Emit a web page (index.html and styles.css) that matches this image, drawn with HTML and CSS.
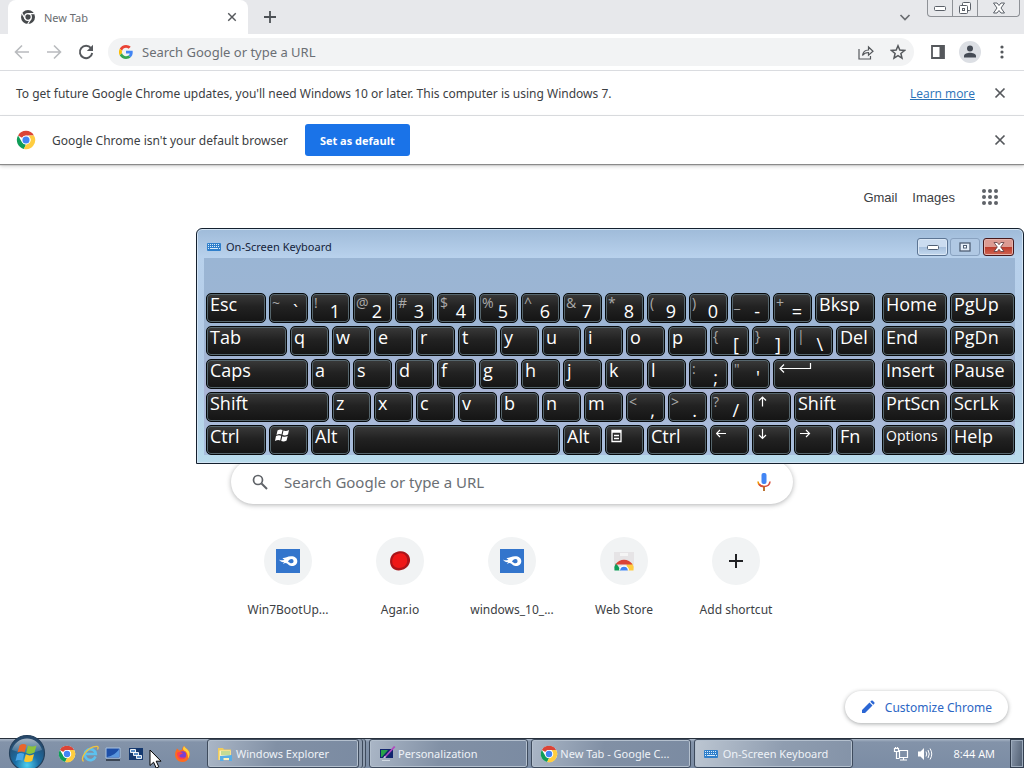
FILE: index.html
```html
<!DOCTYPE html>
<html lang="en">
<head>
<meta charset="utf-8">
<title>New Tab</title>
<link rel="stylesheet" href="styles.css">
</head>
<body>
<svg class="defs" aria-hidden="true">
  <symbol id="chrome" viewBox="0 0 48 48">
    <circle cx="24" cy="24" r="22" fill="#fff"/>
    <path d="M24 2a22 22 0 0 1 19.050 11H24a11 11 0 0 0-9.530 5.500L4.950 13A22 22 0 0 1 24 2z" fill="#db4437"/>
    <path d="M4.950 13l9.520 16.500A11 11 0 0 0 24 35l-5 10.400A22 22 0 0 1 4.950 13z" fill="#0f9d58"/>
    <path d="M43.050 13A22 22 0 0 1 19 45.400L24 35l9.530-5.500A11 11 0 0 0 32 16.400L31 13z" fill="#ffcd40"/>
    <circle cx="24" cy="24" r="10.500" fill="#fff"/>
    <circle cx="24" cy="24" r="8.500" fill="#4285f4"/>
  </symbol>
  <symbol id="close" viewBox="0 0 12 12"><path d="M1.500 1.500l9 9m0-9l-9 9" stroke="currentColor" stroke-width="1.700" fill="none"/></symbol>
  <symbol id="kbd" viewBox="0 0 14 8">
    <rect width="14" height="8" rx="1" fill="#2f7fcb"/>
    <path d="M1 1.500h12M1 3.500h12" stroke="#d9ecfb" stroke-width="1" stroke-dasharray="1 1"/><path d="M1 5.500h12" stroke="#d9ecfb" stroke-dasharray="1 1 8 1"/>
  </symbol>
  <symbol id="mediafire" viewBox="0 0 24 24">
    <rect width="24" height="24" fill="#3375cc"/>
    <path d="M3 10.500C5 11.800 7 11.500 8.500 10.500 7.500 10.300 7 9.700 6.500 9 9 9.500 11 7.200 15 7.200c4 0 6.300 2 6.300 5s-2.500 5-5.800 4.800c-3-.2-3.500-2.700-6-2.900-.9 0-1.500.4-2.300.9.2-1 .5-1.500 1.100-2-1.800.5-3.800-.2-5.300-2.500z" fill="#fff"/>
    <path d="M12 12.700c.8-1.500 2-2.600 3.500-2.600a2.100 2.100 0 0 1 0 4.200c-1.500 0-2-1.200-3.500-1.600z" fill="#3375cc"/>
  </symbol>
</svg>

<div class="desktop">
  <main class="browser">
    <header class="tabstrip">
      <div class="tab">
        <svg class="i16" viewBox="0 0 16 16"><circle cx="8" cy="8" r="7" fill="#46494c"/><circle cx="8" cy="8" r="3.300" fill="none" stroke="#fff" stroke-width="1.300"/><path d="M8 4.700h6.500M5.100 9.700L2 4.300M10.900 9.700L7.700 15" stroke="#fff" stroke-width="1.200"/></svg>
        <span class="tab-title">New Tab</span>
        <button class="icon-btn" aria-label="Close tab"><svg class="i10"><use href="#close"/></svg></button>
      </div>
      <button class="icon-btn new-tab" aria-label="New tab"><svg class="i12" viewBox="0 0 12 12"><path d="M6 0v12M0 6h12" stroke="#4d5156" stroke-width="1.800"/></svg></button>
      <button class="icon-btn tab-search" aria-label="Search tabs"><svg class="i12" viewBox="0 0 12 12"><path d="M1.500 4L6 8.500 10.500 4" fill="none" stroke="currentColor" stroke-width="1.700"/></svg></button>
      <div class="win-controls">
        <button aria-label="Minimize"><svg width="14" height="8" viewBox="0 0 14 8"><rect x="1.500" y="2.500" width="11" height="4" rx="1" fill="#fff" stroke="#5b6068"/></svg></button>
        <button aria-label="Restore"><svg width="14" height="14" viewBox="0 0 14 14" fill="#fff" stroke="#5b6068"><rect x="4.500" y="1.500" width="8" height="8" rx="1"/><rect x="1.500" y="4.500" width="8" height="8" rx="1"/><rect x="4.500" y="7.500" width="2" height="2"/></svg></button>
        <button class="wide" aria-label="Close"><svg width="14" height="12" viewBox="0 0 14 12"><path d="M1.500 1h3.500l2 2.500L9 1h3.500L9 6l3.500 5H9L7 8.500 5 11H1.500L5 6z" fill="#fff" stroke="#5b6068"/></svg></button>
      </div>
    </header>

    <nav class="toolbar" aria-label="Navigation">
      <button class="icon-btn faded" aria-label="Back"><svg class="i16" viewBox="0 0 16 16"><path d="M15 8H2M8 1.500L1.500 8 8 14.500" fill="none" stroke="currentColor" stroke-width="1.600"/></svg></button>
      <button class="icon-btn faded" aria-label="Forward"><svg class="i16" viewBox="0 0 16 16"><path d="M1 8h13M8 1.500L14.500 8 8 14.500" fill="none" stroke="currentColor" stroke-width="1.600"/></svg></button>
      <button class="icon-btn" aria-label="Reload"><svg class="i16" viewBox="0 0 16 16"><path d="M13 4.200A6.200 6.200 0 1 0 14.200 9" fill="none" stroke="currentColor" stroke-width="1.900"/><path d="M15 .8v6.200H8.800z" fill="currentColor"/></svg></button>
      <div class="omnibox">
        <svg class="i14" viewBox="0 0 48 48"><path fill="#ea4335" d="M24 9.500c3.500 0 6.700 1.200 9.200 3.600l6.900-6.900C35.900 2.400 30.500 0 24 0 14.600 0 6.500 5.400 2.600 13.200l8 6.200C12.400 13.700 17.700 9.500 24 9.500z"/><path fill="#4285f4" d="M47 24.600c0-1.600-.2-3.100-.4-4.600H24v9h12.900c-.6 3-2.200 5.500-4.700 7.200l7.700 6C44.400 38 47 31.800 47 24.600z"/><path fill="#fbbc05" d="M10.500 28.600a14.500 14.500 0 0 1 0-9.200l-8-6.200a24 24 0 0 0 0 21.600l8-6.200z"/><path fill="#34a853" d="M24 48c6.500 0 11.900-2.100 15.900-5.800l-7.700-6c-2.200 1.500-4.900 2.300-8.200 2.300-6.300 0-11.600-4.200-13.500-9.900l-8 6.200C6.500 42.600 14.600 48 24 48z"/></svg>
        <input type="text" aria-label="Address bar" placeholder="Search Google or type a URL">
        <button class="icon-btn" aria-label="Share"><svg class="i16" viewBox="0 0 16 16"><path d="M1 5v10h11.500v-3M4.500 11.500C5 8 7 6 10.500 6V3L15 7.200l-4.500 4V8.500c-2.500 0-4.500.8-6 3z" fill="none" stroke="currentColor" stroke-width="1.200"/></svg></button>
        <button class="icon-btn" aria-label="Bookmark"><svg class="i16" viewBox="0 0 16 16"><path d="M8 1.800l1.800 4.300 4.700.4-3.600 3 1.100 4.600L8 11.700l-4 2.400 1.100-4.600-3.600-3 4.700-.4z" fill="none" stroke="currentColor" stroke-width="1.500"/></svg></button>
      </div>
      <button class="icon-btn" aria-label="Side panel"><svg class="i14" viewBox="0 0 14 14"><path d="M1 1h12v12H1z" fill="none" stroke="currentColor" stroke-width="1.800"/><path d="M8.500 1H13v12H8.500z" fill="currentColor"/></svg></button>
      <button class="icon-btn" aria-label="Profile"><svg class="i22" viewBox="0 0 22 22"><circle cx="11" cy="11" r="11" fill="#dcdfe4"/><circle cx="11" cy="7.500" r="3" fill="#454b55"/><path d="M5 16.500v-1.500c0-2 3.500-3.200 6-3.200s6 1.200 6 3.200v1.500z" fill="#454b55"/></svg></button>
      <button class="icon-btn" aria-label="Menu"><svg class="i16" viewBox="0 0 16 16" fill="currentColor"><circle cx="8" cy="3" r="1.600"/><circle cx="8" cy="8" r="1.600"/><circle cx="8" cy="13" r="1.600"/></svg></button>
    </nav>

    <section class="infobar update">
      <p>To get future Google Chrome updates, you'll need Windows 10 or later. This computer is using Windows 7.</p>
      <a class="learn" href="#">Learn more</a>
      <button class="icon-btn" aria-label="Dismiss"><svg class="i12"><use href="#close"/></svg></button>
    </section>
    <section class="infobar default">
      <svg class="i20"><use href="#chrome"/></svg>
      <p>Google Chrome isn't your default browser</p>
      <button class="primary">Set as default</button>
      <button class="icon-btn end" aria-label="Dismiss"><svg class="i12"><use href="#close"/></svg></button>
    </section>

    <section class="page">
      <nav class="page-links" aria-label="Google">
        <a href="#">Gmail</a>
        <a href="#">Images</a>
        <button class="icon-btn apps" aria-label="Google apps"><svg width="18" height="18" viewBox="0 0 18 18" fill="#5f6368"><circle cx="3" cy="3" r="2"/><circle cx="9" cy="3" r="2"/><circle cx="15" cy="3" r="2"/><circle cx="3" cy="9" r="2"/><circle cx="9" cy="9" r="2"/><circle cx="15" cy="9" r="2"/><circle cx="3" cy="15" r="2"/><circle cx="9" cy="15" r="2"/><circle cx="15" cy="15" r="2"/></svg></button>
      </nav>
      <div class="searchbox">
        <svg class="i16" viewBox="0 0 16 16"><circle cx="6" cy="6" r="4.500" fill="none" stroke="#5f6368" stroke-width="1.700"/><path d="M9.500 9.500L15 15" stroke="#5f6368" stroke-width="2"/></svg>
        <input type="text" aria-label="Search" placeholder="Search Google or type a URL">
        <button class="icon-btn" aria-label="Voice search"><svg width="14" height="18" viewBox="0 0 14 18"><rect x="4.500" y="0" width="5" height="11" rx="2" fill="#4285f4"/><path d="M1 8.500c.3 3.300 2.500 5 6 5" fill="none" stroke="#f29900" stroke-width="1.600"/><path d="M2 11c1 1.800 2.700 2.500 5 2.500 3.500 0 5.700-1.700 6-5" fill="none" stroke="#d95040" stroke-width="1.600"/><path d="M7 13.500V18" stroke="#b5651d" stroke-width="1.800"/></svg></button>
      </div>
      <div class="shortcuts">
        <a href="#"><span class="disc"><svg class="i24"><use href="#mediafire"/></svg></span><span>Win7BootUp...</span></a>
        <a href="#"><span class="disc"><svg class="i24" viewBox="0 0 24 24"><path d="M10 2.500c4-1 8 0 10.500 3.500 2.500 4 1.800 8-.5 11-3 4-9 5.500-13.500 3.500C2 18 1.500 13 2.500 9 3.500 5.500 6 3.500 10 2.500z" fill="#a9141a"/><path d="M11 4.500c4-.8 6 .8 7.500 3.500 1.300 3 .8 6-1 8.200-2.500 2.800-7 3.500-10.300 1.800C4 16 4 13 4.500 10c.8-3.200 3.200-4.800 6.500-5.500z" fill="#ef1717"/></svg></span><span>Agar.io</span></a>
        <a href="#"><span class="disc"><svg class="i24"><use href="#mediafire"/></svg></span><span>windows_10_...</span></a>
        <a href="#"><span class="disc"><svg class="i24" viewBox="0 0 24 24"><path d="M2 3h20v15H2z" fill="#e6e4e6"/><path d="M8 4h8v3H8z" fill="#f5f5f5"/><path d="M2.500 21.500A10 10 0 0 1 4 14l5 7.500z" fill="#0f9d58"/><path d="M20 14a10 10 0 0 1 1.500 7.500H15L14.500 14z" fill="#ffcd40"/><path d="M3.500 15.500a10 10 0 0 1 17 0z" fill="#db4437"/><path d="M7 21.500a5 5 0 0 1 10 0z" fill="#fff"/><path d="M8.200 21.500a3.800 3.800 0 0 1 7.600 0z" fill="#4285f4"/></svg></span><span>Web Store</span></a>
        <a href="#"><span class="disc"><svg width="14" height="14" viewBox="0 0 14 14"><path d="M7 0v14M0 7h14" stroke="#202124" stroke-width="2"/></svg></span><span>Add shortcut</span></a>
      </div>
      <button class="customize"><svg width="14" height="14" viewBox="0 0 14 14" fill="#2b66d4"><path d="M1 13v-3l7.500-7.500 3 3L4 13zM9.300 1.700l1-1c.4-.4 1-.4 1.400 0l1.600 1.600c.4.4.4 1 0 1.400l-1 1z"/></svg>Customize Chrome</button>
    </section>
  </main>

  <section class="osk" aria-label="On-Screen Keyboard">
    <header class="osk-title">
      <svg width="14" height="8"><use href="#kbd"/></svg>
      <h1>On-Screen Keyboard</h1>
      <button aria-label="Minimize"><svg width="14" height="8" viewBox="0 0 14 8"><rect x="1.500" y="2.500" width="11" height="4" rx="1" fill="#fff" stroke="#4f5f75"/></svg></button>
      <button class="off" aria-label="Maximize" disabled><svg width="12" height="10" viewBox="0 0 12 10"><rect x="1" y="1" width="10" height="8" fill="#e5eef8" stroke="#4f5f75" stroke-width="1.300"/><rect x="4.500" y="3.500" width="3" height="2.500" fill="#fff" stroke="#4f5f75"/></svg></button>
      <button class="x" aria-label="Close"><svg width="12" height="10" viewBox="0 0 12 10"><path d="M1 .5h3.200L6 2.700 7.800.5H11L7.700 5 11 9.500H7.800L6 7.300 4.200 9.500H1L4.300 5z" fill="#fff" stroke="#5a3a3e" stroke-width=".8"/></svg></button>
    </header>
    <div class="keys">
      <div class="main-keys">
        <button class="key s3">Esc</button>
        <button class="key dual"><small>~</small><b>`</b></button>
        <button class="key dual"><small>!</small><b>1</b></button>
        <button class="key dual"><small>@</small><b>2</b></button>
        <button class="key dual"><small>#</small><b>3</b></button>
        <button class="key dual"><small>$</small><b>4</b></button>
        <button class="key dual"><small>%</small><b>5</b></button>
        <button class="key dual"><small>^</small><b>6</b></button>
        <button class="key dual"><small>&amp;</small><b>7</b></button>
        <button class="key dual"><small>*</small><b>8</b></button>
        <button class="key dual"><small>(</small><b>9</b></button>
        <button class="key dual"><small>)</small><b>0</b></button>
        <button class="key dual"><small>_</small><b>-</b></button>
        <button class="key dual"><small>+</small><b>=</b></button>
        <button class="key s3">Bksp</button>

        <button class="key s4">Tab</button>
        <button class="key">q</button>
        <button class="key">w</button>
        <button class="key">e</button>
        <button class="key">r</button>
        <button class="key">t</button>
        <button class="key">y</button>
        <button class="key">u</button>
        <button class="key">i</button>
        <button class="key">o</button>
        <button class="key">p</button>
        <button class="key dual"><small>{</small><b>[</b></button>
        <button class="key dual"><small>}</small><b>]</b></button>
        <button class="key dual"><small>|</small><b>\</b></button>
        <button class="key">Del</button>

        <button class="key s5">Caps</button>
        <button class="key">a</button>
        <button class="key">s</button>
        <button class="key">d</button>
        <button class="key">f</button>
        <button class="key">g</button>
        <button class="key">h</button>
        <button class="key">j</button>
        <button class="key">k</button>
        <button class="key">l</button>
        <button class="key dual"><small>:</small><b>;</b></button>
        <button class="key dual"><small>"</small><b>'</b></button>
        <button class="key s5 glyph" aria-label="Enter"><svg width="34" height="10" viewBox="0 0 34 10"><path d="M31.500 0v5.500H1M5 1.500l-4 4 4 4" fill="none" stroke="#fff" stroke-width="1.200"/></svg></button>

        <button class="key s6">Shift</button>
        <button class="key">z</button>
        <button class="key">x</button>
        <button class="key">c</button>
        <button class="key">v</button>
        <button class="key">b</button>
        <button class="key">n</button>
        <button class="key">m</button>
        <button class="key dual"><small>&lt;</small><b>,</b></button>
        <button class="key dual"><small>&gt;</small><b>.</b></button>
        <button class="key dual"><small>?</small><b>/</b></button>
        <button class="key glyph" aria-label="Up"><svg width="12" height="12" viewBox="0 0 12 12"><path d="M4.500 10.500V1M1 4.500L4.500 1 8 4.500" fill="none" stroke="#fff" stroke-width="1.200"/></svg></button>
        <button class="key s4">Shift</button>

        <button class="key s3">Ctrl</button>
        <button class="key glyph" aria-label="Windows"><svg width="15" height="13" viewBox="0 0 15 13" fill="#fff"><path d="M2.500 1.500Q5 0 7.500 1L6.500 5.500Q4 4.500 1.500 6zM8.500 1.500Q11 2.500 14 1L13 5.500Q10 7 7.500 6zM1 7Q4 5.800 6.200 6.800L5.200 11.500Q3 10.500 0 12zM7.300 7.300Q10 8.500 12.700 7L11.600 11.500Q9 13 6.200 12z"/></svg></button>
        <button class="key">Alt</button>
        <button class="key s10" aria-label="Space"></button>
        <button class="key">Alt</button>
        <button class="key glyph" aria-label="Menu key"><svg width="12" height="14" viewBox="0 0 12 14"><path d="M1 1.500h9v11H1zM1 3h9M3 6.500h5M3 9.500h5" fill="none" stroke="#fff" stroke-width="1.300"/></svg></button>
        <button class="key s3">Ctrl</button>
        <button class="key glyph" aria-label="Left"><svg width="12" height="12" viewBox="0 0 12 12"><path d="M10 4.500H.5M4 1L.5 4.500 4 8" fill="none" stroke="#fff" stroke-width="1.200"/></svg></button>
        <button class="key glyph" aria-label="Down"><svg width="12" height="12" viewBox="0 0 12 12"><path d="M4.500 0v9.500M1 6l3.500 3.500L8 6" fill="none" stroke="#fff" stroke-width="1.200"/></svg></button>
        <button class="key glyph" aria-label="Right"><svg width="12" height="12" viewBox="0 0 12 12"><path d="M0 4.500h9.500M6 1l3.500 3.500L6 8" fill="none" stroke="#fff" stroke-width="1.200"/></svg></button>
        <button class="key">Fn</button>
      </div>
      <div class="side-keys">
        <button class="key">Home</button><button class="key">PgUp</button>
        <button class="key">End</button><button class="key">PgDn</button>
        <button class="key">Insert</button><button class="key">Pause</button>
        <button class="key">PrtScn</button><button class="key">ScrLk</button>
        <button class="key compact">Options</button><button class="key">Help</button>
      </div>
    </div>
  </section>

  <footer class="taskbar">
    <div class="quick">
      <button class="start" aria-label="Start"><svg width="38" height="38" viewBox="0 0 38 38">
        <defs>
          <radialGradient id="orb" cx=".5" cy=".85" r=".75"><stop offset="0" stop-color="#4ed0f0"/><stop offset=".45" stop-color="#1b6fa6"/><stop offset="1" stop-color="#27496b"/></radialGradient>
          <linearGradient id="shine" x2="0" y2="1"><stop offset="0" stop-color="#fff" stop-opacity=".6"/><stop offset="1" stop-color="#fff" stop-opacity=".1"/></linearGradient>
        </defs>
        <circle cx="19" cy="19" r="17.500" fill="url(#orb)" stroke="#24405c" stroke-width="1.200"/>
        <path d="M4 16A15.500 15.500 0 0 1 34 16Q19 22 4 16z" fill="url(#shine)"/>
        <path d="M11.500 11.500Q15 9 18.500 11l-1.800 7.200Q13 16.500 9.500 18.500z" fill="#e8662c"/><path d="M20 11.500Q24 13.500 28.500 11.500L26.500 18.500Q22 21 18.200 19z" fill="#8cc43c"/><path d="M9.200 20Q12.500 18.200 16.200 19.700l-1.700 7Q11 25 7.500 27z" fill="#4aa5e6"/><path d="M17.800 20.300Q21.500 22.500 26 20.300L24.200 27Q20 29 16 27.200z" fill="#fbc62d"/>
      </svg></button>
      <button class="launch" aria-label="Chrome"><svg class="i18"><use href="#chrome"/></svg></button>
      <button class="launch" aria-label="Internet Explorer"><svg class="i18" viewBox="0 0 18 18"><path d="M14.500 11.500a5.500 5.500 0 1 1 .3-2.500H5" fill="none" stroke="#5cc1ef" stroke-width="2.600"/><path d="M2.500 16.500C-1 13 6 2 15.500 1.300c2-.1 2 1.500 1 3.200" fill="none" stroke="#f2c43c" stroke-width="1.300"/></svg></button>
      <button class="launch" aria-label="Show desktop"><svg class="i18" viewBox="0 0 18 18"><path d="M2 3h14v10H2z" fill="#1e4fa8" stroke="#a9c3e0"/><path d="M3 12C8 11 13 8 15 4v8z" fill="#5a96dd"/><path d="M2 14h14v2H2z" fill="#3b4656"/></svg></button>
      <button class="launch" aria-label="Switch windows"><svg class="i18" viewBox="0 0 18 18"><path d="M2 3h14v12H2z" fill="#14386e"/><path d="M3.500 4.500h5v3h-5zM6.500 7.500h5v3h-5zM9.500 10.500h5v3h-5z" fill="#5d90c8" stroke="#fff" stroke-width=".9"/></svg></button>
      <button class="launch fox" aria-label="Firefox"><svg class="i18" viewBox="0 0 18 18"><path d="M10 1c1 2 3.500 2.500 5 5.500 2 4-.5 10.500-6.500 10.500C3 17 .5 12.500 1.200 8 1.500 6 2.500 5 3 3.500 4 4 4.500 5 5 5.500 6 5 7 4.800 8 5c0-1.500 1-3 2-4z" fill="#ff6a1f"/><path d="M10 1c1 2 3.500 2.500 5 5.500 1 2.500.5 5-1 7 .2-4-1-7-4-8-1.500-.8-1-3 0-4.500z" fill="#ffd13b"/><circle cx="8.500" cy="10" r="3.700" fill="#7b3fd0"/><path d="M3 8c2-2 4-.5 6 0-1 1.500-3 1-3.500 2.500S8 13.500 11 12c-2 4-8 3-8-4z" fill="#ff3e4e"/></svg></button>
      <svg class="cursor" width="13" height="20" viewBox="0 0 13 20"><path d="M1 1v15.500l3.600-3.300 2.600 5.800 2.600-1.200-2.600-5.600H12z" fill="#fff" stroke="#000"/></svg>
    </div>
    <div class="tasks">
      <button class="task stack"><svg class="i18" viewBox="0 0 18 18"><path d="M2 3h5l1 1.500h7V15H2z" fill="#f0cb5d"/><path d="M3.500 5.500h11V15h-11z" fill="#fdf2bd"/><path d="M5 7h9M5 9h9" stroke="#8cc46a"/><path d="M4 11l12-1v6h-3v-3H7.500v3H4z" fill="#58aee6"/></svg><span>Windows Explorer</span></button>
      <button class="task"><svg class="i18" viewBox="0 0 18 18"><path d="M2 4h13v9H2z" fill="#10256e"/><path d="M3 5h7L4 12H3z" fill="#27a14a"/><path d="M6 12L16 1l1.500 1L8 12z" fill="#b04ac0"/><path d="M5 13l2-2 1 1.500z" fill="#fff"/><path d="M4 15h8v1H4z" fill="#cfd8e2"/></svg><span>Personalization</span></button>
      <button class="task"><svg class="i18"><use href="#chrome"/></svg><span>New Tab - Google C...</span></button>
      <button class="task active"><svg class="kb" width="14" height="8"><use href="#kbd"/></svg><span>On-Screen Keyboard</span></button>
    </div>
    <div class="tray">
      <svg class="i16" viewBox="0 0 16 16" fill="none" stroke="#fff" stroke-width="1.200"><path d="M6.500 4.500h8v7h-8zM7 14h7M10.500 11.500V14M1.500 2.500h4v3h-4zM2.500 1v1.500M4.500 1v1.500M3.500 5.500v7h3"/></svg>
      <svg class="i16" viewBox="0 0 16 16"><path d="M1 5.500h2.500L7 2v12l-3.500-3.500H1z" fill="#fff"/><path d="M9 5.500q1.500 2.500 0 5M11 4q2.500 4 0 8M13 2.500q3.500 5.500 0 11" fill="none" stroke="#fff"/></svg>
      <time>8:44 AM</time>
    </div>
    <button class="peek" aria-label="Show desktop"></button>
  </footer>
</div>
</body>
</html>
```
FILE: styles.css
```css
* { box-sizing: border-box; }

body {
  margin: 0;
  font-family: "Noto Sans", "Open Sans", sans-serif;
  font-size: 12px;
  color: #3c4043;
}

button {
  font: inherit;
  color: inherit;
  padding: 0;
  border: 0;
  background: none;
}

input {
  font: inherit;
  flex: 1;
  min-width: 0;
  padding: 0;
  border: 0;
  outline: 0;
  background: none;
}
input::placeholder { color: #6b6f74; opacity: 1; }
p, h1 { margin: 0; font-size: 12px; font-weight: 400; }
svg { display: block; flex: none; }

.defs { position: absolute; width: 0; height: 0; }
.i10 { width: 10px; height: 10px; }
.i12 { width: 12px; height: 12px; }
.i14 { width: 14px; height: 14px; }
.i16 { width: 16px; height: 16px; }
.i18 { width: 18px; height: 18px; }
.i20 { width: 20px; height: 20px; }
.i22 { width: 22px; height: 22px; }
.i24 { width: 24px; height: 24px; }

.desktop {
  position: relative;
  display: flex;
  flex-direction: column;
  min-height: 100vh;
  overflow: hidden;
}

.browser { display: flex; flex: 1; flex-direction: column; background: #fff; }

.icon-btn {
  display: flex;
  flex: none;
  align-items: center;
  justify-content: center;
  color: #55585c;
}

/* Tab strip */
.tabstrip {
  display: flex;
  align-items: center;
  height: 34px;
  padding: 0 4px 0 8px;
  background: #e7e8eb;
}
.tab {
  display: flex;
  align-items: center;
  gap: 8px;
  width: 240px;
  height: 34px;
  padding: 0 11px 0 12px;
  border-radius: 8px 8px 0 0;
  background: #fff;
}
.tab-title { flex: 1; color: #6a6d71; font-size: 11px; }
.new-tab { margin-left: 16px; }
.tab-search { margin-left: auto; color: #6a6d71; }
.win-controls {
  display: flex;
  align-self: flex-start;
  height: 17px;
  margin-left: 16px;
  border: 1px solid #8e9196;
  border-top: 0;
  border-radius: 0 0 4px 4px;
}
.win-controls button {
  display: flex;
  align-items: center;
  justify-content: center;
  width: 25px;
  border-right: 1px solid #8e9196;
}
.win-controls .wide { width: 41px; border-right: 0; }

/* Toolbar */
.toolbar {
  display: flex;
  align-items: center;
  height: 37px;
  padding: 0 6px;
  border-bottom: 1px solid #dadce0;
}
.toolbar .icon-btn { width: 32px; }
.toolbar .faded { color: #b9bbbe; }
.omnibox {
  display: flex;
  flex: 1;
  align-items: center;
  height: 28px;
  margin: 0 8px 0 6px;
  padding-left: 11px;
  border-radius: 14px;
  background: #f2f3f4;
  font-size: 13px;
}
.omnibox input { margin-left: 9px; }

/* Info bars */
.infobar { display: flex; align-items: center; padding: 0 18px 0 16px; }
.update { height: 45px; border-bottom: 1px solid #dadce0; }
.learn { margin: 0 19px 0 auto; color: #2a72b8; font-family: "Open Sans", sans-serif; }
.default {
  height: 48px;
  box-shadow: 0 1px 1px #8a8a8a, 0 2px 4px #ccc;
}
.default p { margin: 0 17px 0 16px; }
.primary {
  height: 32px;
  padding: 0 15px;
  border-radius: 3px;
  background: #1a73e8;
  color: #fff;
  font-family: "Open Sans", sans-serif;
  font-size: 11px;
  font-weight: 700;
}
.end { margin-left: auto; }

/* New tab page */
.page { display: flex; flex: 1; flex-direction: column; align-items: center; }
.page-links {
  display: flex;
  align-self: flex-end;
  align-items: center;
  gap: 15px;
  padding: 24px 25px 0 0;
  font-family: "Liberation Sans", sans-serif;
  font-size: 13px;
}
.page-links a { color: #3c4043; text-decoration: none; }
.apps { margin-left: 11px; }
.searchbox {
  display: flex;
  align-items: center;
  gap: 16px;
  width: calc(100% - 48px);
  max-width: 562px;
  height: 44px;
  margin-top: 254px;
  padding: 0 22px 0 21px;
  border-radius: 22px;
  background: #fff;
  box-shadow: 0 1px 5px rgba(32, 33, 36, .35);
  font-size: 15px;
}
.shortcuts { display: grid; grid-template-columns: repeat(5, 112px); margin-top: 33px; }
.shortcuts a {
  display: flex;
  flex-direction: column;
  align-items: center;
  gap: 16px;
  color: #3c4043;
  text-decoration: none;
}
.disc {
  display: flex;
  align-items: center;
  justify-content: center;
  width: 48px;
  height: 48px;
  border-radius: 50%;
  background: #f1f3f4;
}
.customize {
  display: flex;
  align-items: center;
  align-self: flex-end;
  gap: 10px;
  height: 32px;
  margin: auto 16px 15px 0;
  padding: 0 16px;
  border-radius: 16px;
  background: #fff;
  box-shadow: 0 1px 4px rgba(60, 64, 67, .45);
  color: #2b66c4;
}

/* On-screen keyboard window */
.osk {
  position: absolute;
  top: 228px;
  right: 0;
  left: 196px;
  padding: 0 8px 8px 7px;
  border: 1px solid #14202e;
  border-radius: 6px 6px 0 0;
  background: linear-gradient(#9fbbd9, #b8d1ec 28px, #b3cbe6 60%, #b9dcec);
  box-shadow: inset 0 0 0 1px #d3e4f4;
}
.osk-title {
  display: flex;
  align-items: center;
  gap: 5px;
  height: 29px;
  padding: 6px 1px 0 3px;
  color: #14233a;
}
.osk-title h1 { flex: 1; font-size: 11px; }
.osk-title button {
  display: flex;
  align-items: center;
  justify-content: center;
  width: 31px;
  height: 18px;
  border: 1px solid #5c7594;
  border-radius: 3px;
  background: linear-gradient(#cbdcf0 50%, #a6bfdc 50%, #c4d9ef);
  box-shadow: inset 0 0 0 1px #dbe8f6;
}
.osk-title h1 + button { margin-right: -3px; }
.osk-title .off { width: 30px; border-color: #89a2c0; background: #b0c8e3; box-shadow: none; }
.osk-title .x {
  margin-left: -2px;
  border-color: #46191c;
  background: linear-gradient(#dc9b92 50%, #bc3a2a 50%, #cf6452);
  box-shadow: inset 0 0 0 1px #e5b3ac;
}
.keys {
  display: flex;
  gap: 7px;
  padding: 35px 0 0 2px;
  background: linear-gradient(#9ab5d4, #9db5d3 40%, #a9b4d4 65%, #a8bfdd);
}
.main-keys {
  display: grid;
  flex: 669;
  grid-template-columns: repeat(32, minmax(0, 1fr));
  grid-auto-rows: 30px;
  gap: 3px;
}
.side-keys {
  display: grid;
  flex: 133;
  grid-template-columns: repeat(2, minmax(0, 1fr));
  grid-auto-rows: 30px;
  gap: 3px;
}
.key {
  display: flex;
  min-width: 0;
  padding: 0 3px;
  border: 1px solid #06090b;
  border-radius: 5px;
  background: linear-gradient(#3a3a3a, #222 45%, #141414);
  box-shadow: inset 0 0 0 1px #56666d;
  color: #fff;
  font-family: "Open Sans", "Noto Sans", sans-serif;
  font-size: 18px;
  line-height: 20px;
}
.main-keys .key { grid-column: span 2; }
.main-keys .s3 { grid-column: span 3; }
.main-keys .s4 { grid-column: span 4; }
.main-keys .s5 { grid-column: span 5; }
.main-keys .s6 { grid-column: span 6; }
.main-keys .s10 { grid-column: span 10; }
.main-keys .dual { justify-content: space-between; padding: 0 9px 0 2px; }
.dual small { color: #aaa; font-size: 14px; line-height: 17px; }
.dual b { align-self: flex-end; font-weight: 400; line-height: 22px; }
.glyph { padding: 3px 5px; }
.compact { font-size: 14px; }

/* Taskbar */
.taskbar {
  display: flex;
  position: relative;
  height: 30px;
  border-top: 1px solid #27303c;
  background: linear-gradient(#aab7c7, #8393a9 3px, #7b8ca4);
  color: #fff;
  font-size: 11px;
}
.quick { display: flex; position: relative; align-items: center; width: 207px; padding-left: 8px; }
.start { margin: -6px 12px -5px 0; }
.launch { margin-right: 5px; }
.fox { margin-left: 24px; }
.cursor { position: absolute; top: 10px; left: 149px; }
.tasks { display: flex; flex: 1; gap: 3px; max-width: 646px; }
.task {
  display: flex;
  flex: 1;
  align-items: center;
  gap: 2px;
  min-width: 0;
  padding: 0 8px;
  border: 1px solid #3e4b5d;
  border-radius: 3px;
  background: linear-gradient(100deg, #aab6c6, #8190a5 45%, #7b8ba2);
  box-shadow: inset 0 0 0 1px #b4c0ce;
  color: #eef2f7;
  white-space: nowrap;
}
.task.stack { flex: none; width: 152px; margin-right: 7px; box-shadow: inset 0 0 0 1px #b4c0ce, 3px 0 #8d9bae, 4px 0 #3e4b5d, 6px 0 #8d9bae, 7px 0 #3e4b5d; }
.task.active { background: linear-gradient(100deg, #bcc6d2, #8f9db0 55%, #8493a8); }
.task .kb { margin: 0 3px 0 1px; }
.tray { display: flex; align-items: center; gap: 8px; margin-left: auto; padding-right: 15px; }
.tray time { margin-left: 13px; font-family: "Open Sans", sans-serif; }
.peek {
  width: 14px;
  border: 1px solid #333f50;
  background: linear-gradient(100deg, #8c9aae, #4d5b6e);
  box-shadow: inset 0 0 0 1px #9dabbc;
}
```
